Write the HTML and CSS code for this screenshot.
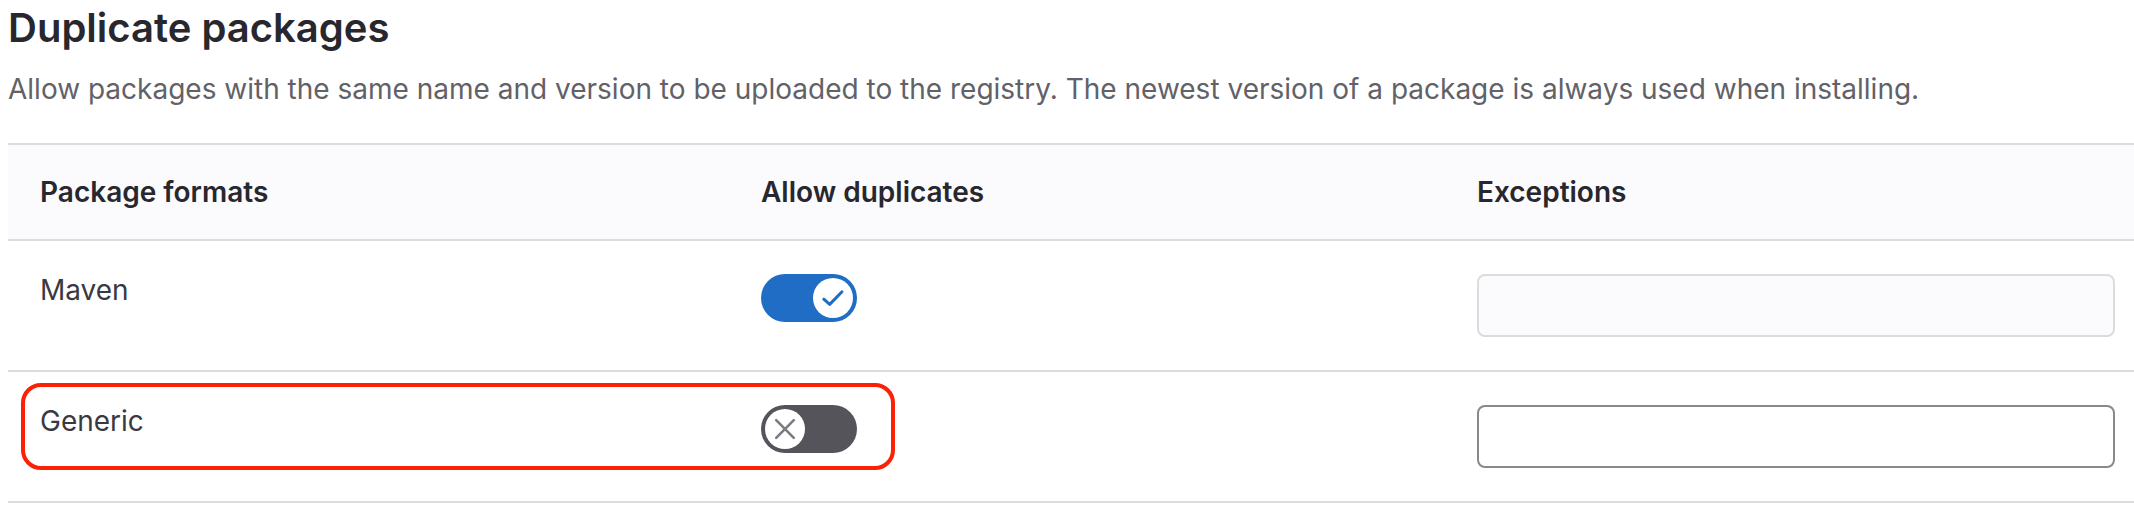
FILE: index.html
```html
<!DOCTYPE html>
<html lang="en">
<head>
<meta charset="utf-8">
<title>Duplicate packages</title>
<link rel="stylesheet" href="styles.css">
</head>
<body>
<section class="settings">
  <h2 class="title">Duplicate packages</h2>
  <p class="desc">Allow packages with the same name and version to be uploaded to the registry. The newest version of a package is always used when installing.</p>
  <div class="table">
    <div class="row head">
      <div class="cell">Package formats</div>
      <div class="cell">Allow duplicates</div>
      <div class="cell last">Exceptions</div>
    </div>
    <div class="row">
      <div class="cell text">Maven</div>
      <div class="cell">
        <button class="toggle on" type="button" aria-pressed="true">
          <span class="knob">
            <svg width="40" height="40" viewBox="0 0 40 40"><path d="M10.8 21.2 L16.7 26.4 L29 13.8" fill="none" stroke="#1f6dc4" stroke-width="3" stroke-linecap="round" stroke-linejoin="round"/></svg>
          </span>
        </button>
      </div>
      <div class="cell last"><input class="field disabled" type="text" disabled></div>
    </div>
    <div class="row">
      <div class="cell text">Generic</div>
      <div class="cell">
        <button class="toggle off" type="button" aria-pressed="false">
          <span class="knob">
            <svg width="40" height="40" viewBox="0 0 40 40"><path d="M11.2 11.2 L28.8 28.8 M28.8 11.2 L11.2 28.8" fill="none" stroke="#7c7b81" stroke-width="2.6" stroke-linecap="round"/></svg>
          </span>
        </button>
      </div>
      <div class="cell last"><input class="field" type="text"></div>
      <div class="highlight"></div>
    </div>
  </div>
</section>
</body>
</html>
```

FILE: styles.css
```css
html, body {
  margin: 0;
  padding: 0;
  background: #ffffff;
}
body {
  padding: 8px 0 0 8px;
  font-family: Inter, "Noto Sans", "Liberation Sans", sans-serif;
  color: #333238;
}
.title {
  margin: 0;
  font-size: 40px;
  line-height: 40px;
  font-weight: 600;
  color: #28272d;
  letter-spacing: 0;
}
.desc {
  margin: 21px 0 34px;
  font-size: 28px;
  line-height: 40px;
  color: #626168;
}
.table {
  border-top: 2px solid #dcdcde;
}
.row {
  position: relative;
  display: grid;
  grid-template-columns: 721px 716px 1fr;
  border-bottom: 2px solid #dcdcde;
}
.cell {
  padding: 33px 32px;
  font-size: 28px;
  line-height: 32px;
  display: flex;
  align-items: flex-start;
}
.cell.last {
  padding-right: 19px;
}
.head {
  background: #fbfafd;
}
.head .cell {
  padding-top: 32px;
  padding-bottom: 32px;
  line-height: 30px;
  font-weight: 600;
  color: #28272d;
}
.text {
  color: #3a393f;
}
.toggle {
  position: relative;
  width: 96px;
  height: 48px;
  border: none;
  border-radius: 24px;
  padding: 0;
  margin: 0;
  display: flex;
  align-items: center;
  cursor: pointer;
}
.toggle.on {
  background: #1f6dc4;
  justify-content: flex-end;
}
.toggle.off {
  background: #55545a;
  justify-content: flex-start;
}
.knob {
  width: 40px;
  height: 40px;
  margin: 0 4px;
  border-radius: 50%;
  background: #ffffff;
  display: flex;
}
.field {
  box-sizing: border-box;
  width: 100%;
  height: 63px;
  margin: 0;
  border-radius: 8px;
  border: 2px solid #89888d;
  background: #ffffff;
  font: inherit;
}
.field.disabled {
  border-color: #dcdcde;
  background: #fbfafd;
}
.highlight {
  position: absolute;
  left: 13px;
  top: 11px;
  width: 874px;
  height: 87px;
  box-sizing: border-box;
  border: 4px solid #fa2106;
  border-radius: 20px;
  pointer-events: none;
}
```
